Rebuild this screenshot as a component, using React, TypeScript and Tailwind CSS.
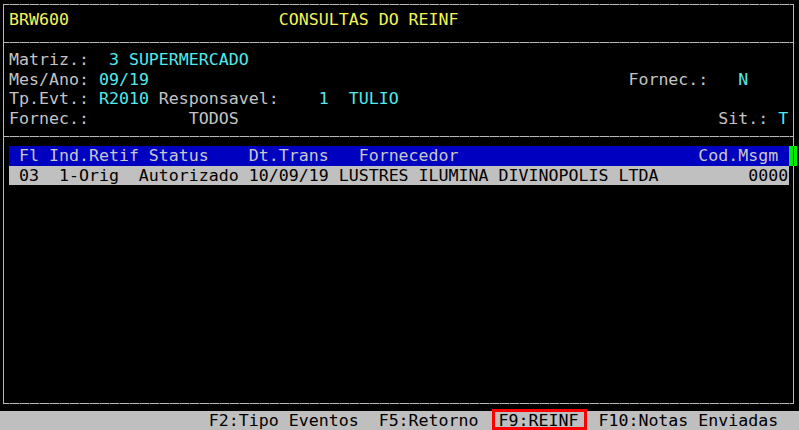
const mono = "font-['DejaVu_Sans_Mono','Liberation_Mono',monospace]";

function Line({ children, className = "" }: { children?: React.ReactNode; className?: string }) {
  return <div className={"h-[19.5px] leading-[19.5px] whitespace-pre " + className}>{children}</div>;
}

// linha horizontal com os pontinhos entre as celulas
const HLine = () => (
  <div className="h-[1px] shrink-0 bg-[repeating-linear-gradient(90deg,#b9b9b9_0_5px,#7c4e36_5px_6px,#b9b9b9_6px_10px)]" />
);

const L = ({ t }: { t: string }) => <span className="text-[#c4c4c4]">{t}</span>;
const V = ({ t }: { t: string }) => <span className="text-[#52eaea]">{t}</span>;

export default function App() {
  return (
    <div className={"relative w-[799px] h-[430px] bg-black overflow-hidden text-[16.6px] " + mono}>
      <div className="ml-[3px] mt-[4px] w-[791px] h-[400px] border-x border-[#b9b9b9] flex flex-col">
        <HLine />
        {/* titulo */}
        <div className="h-[37px] pl-[5px] pt-[5px] text-[#f4f456]">
          <Line>{"BRW600                     CONSULTAS DO REINF"}</Line>
        </div>
        <HLine />

        {/* filtros */}
        <div className="h-[93px] pl-[5px] pt-[7px]">
          <Line>
            <L t="Matriz.:  " />
            <V t="3 SUPERMERCADO" />
          </Line>
          <Line>
            <L t="Mes/Ano: " />
            <V t="09/19" />
            <L t={" ".repeat(48) + "Fornec.:   "} />
            <V t="N" />
          </Line>
          <Line>
            <L t="Tp.Evt.: " />
            <V t="R2010" />
            <L t=" Responsavel:    " />
            <V t="1  TULIO" />
          </Line>
          <Line>
            <L t={"Fornec.:          TODOS" + " ".repeat(48) + "Sit.: "} />
            <V t="T" />
          </Line>
        </div>
        <HLine />

        {/* tabela */}
        <div className="flex-1 pl-[5px] pt-[9px]">
          <Line className="w-[780px] bg-[#0000c0] text-[#c8c8c8]">
            {" Fl Ind.Retif Status    Dt.Trans   Fornecedor                        Cod.Msgm "}
          </Line>
          <Line className="w-[780px] bg-[#c0c0c0] text-black">
            {" 03  1-Orig  Autorizado 10/09/19 LUSTRES ILUMINA DIVINOPOLIS LTDA         0000"}
          </Line>
        </div>
        <HLine />
      </div>

      {/* cursor */}
      <div className="absolute left-[789px] top-[146px] w-[8px] h-[19.5px] bg-[#00ee00] flex">
        <div className="ml-[4px] w-[1px] h-full bg-[#1a1a1a]" />
      </div>

      {/* rodape */}
      <div className="mt-[7px] h-[19px] bg-[#bfbfbf] text-black pl-[9px]">
        <div className="h-[19px] leading-[19px] whitespace-pre">
          {"                    F2:Tipo Eventos  F5:Retorno  F9:REINF  F10:Notas Enviadas"}
        </div>
      </div>

      <div className="absolute left-[492px] top-[409px] w-[95px] h-[21px] border-[3px] border-[#ff0000]" />
    </div>
  );
}
